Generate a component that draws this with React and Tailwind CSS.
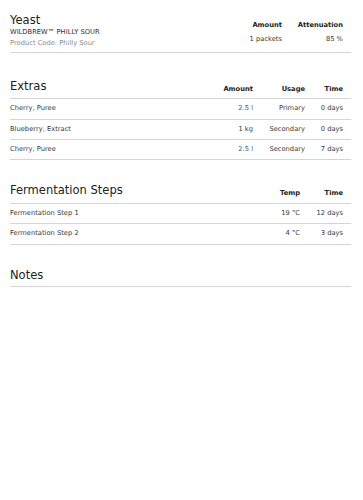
import React from "react";

const font = { fontFamily: '"DejaVu Sans", Verdana, sans-serif' };

function Heading({ children, className = "" }) {
  return (
    <div className={"text-[11.52px] leading-[14px] text-[#222] " + className}>{children}</div>
  );
}

function Label({ children }) {
  return <div className="text-right font-bold text-[6.72px] leading-[10px] text-[#222] pr-[8px]">{children}</div>;
}

function Cell({ children, right, className = "" }) {
  return (
    <div
      className={
        "text-[6.72px] leading-[9.3px] text-[#3a3a3a] py-[5px] whitespace-nowrap " +
        (right ? "text-right pr-[8px] " : "") +
        className
      }
    >
      {children}
    </div>
  );
}

export default function App() {
  const extras = [
    ["Cherry, Puree", "2.5 l", "Primary", "0 days", true],
    ["Blueberry, Extract", "1 kg", "Secondary", "0 days", false],
    ["Cherry, Puree", "2.5 l", "Secondary", "7 days", true],
  ];
  const steps = [
    ["Fermentation Step 1", "19 °C", "12 days"],
    ["Fermentation Step 2", "4 °C", "3 days"],
  ];
  return (
    <div className="bg-white w-[363px] min-h-[500px] pl-[10px] pr-[12px] pt-[13px]" style={font}>
      {/* Yeast */}
      <div className="grid grid-cols-[1fr_50px_61px] border-b border-[#d4d4d4] pb-[3.6px]">
        <div className="flex flex-col">
          <Heading>Yeast</Heading>
          <div className="mt-[0.4px] text-[6.72px] leading-[10.7px] text-[#333]">WILDBREW™ PHILLY SOUR</div>
          <div className="text-[6.72px] leading-[10.7px] text-[#8a8a8a]">Product Code: Philly Sour</div>
        </div>
        <div className="pt-[7px]">
          <Label>Amount</Label>
          <div className="mt-[4.4px] text-right text-[6.72px] leading-[10px] text-[#3a3a3a] pr-[8px] whitespace-nowrap">1 packets</div>
        </div>
        <div className="pt-[7px]">
          <Label>Attenuation</Label>
          <div className="mt-[4.4px] text-right text-[6.72px] leading-[10px] text-[#3a3a3a] pr-[8px] whitespace-nowrap">85 %</div>
        </div>
      </div>

      {/* Extras */}
      <div className="mt-[25.6px]">
        <div className="grid grid-cols-[1fr_46px_52px_38px] items-end border-b border-[#d4d4d4] pb-[4.5px]">
          <Heading className="mb-[1px]">Extras</Heading>
          <Label>Amount</Label>
          <Label>Usage</Label>
          <Label>Time</Label>
        </div>
        {extras.map((r, i) => (
          <div key={i} className="grid grid-cols-[1fr_46px_52px_38px] border-b border-[#d4d4d4]">
            <Cell>{r[0]}</Cell>
            <Cell right className={r[4] ? "text-[#4a5a72]" : ""}>{r[1]}</Cell>
            <Cell right>{r[2]}</Cell>
            <Cell right>{r[3]}</Cell>
          </div>
        ))}
      </div>

      {/* Fermentation Steps */}
      <div className="mt-[23.1px]">
        <div className="grid grid-cols-[1fr_50px_43px] items-end border-b border-[#d4d4d4] pb-[4.5px]">
          <Heading className="mb-[1px]">Fermentation Steps</Heading>
          <Label>Temp</Label>
          <Label>Time</Label>
        </div>
        {steps.map((r, i) => (
          <div key={i} className="grid grid-cols-[1fr_50px_43px] border-b border-[#d4d4d4]">
            <Cell>{r[0]}</Cell>
            <Cell right>{r[1]}</Cell>
            <Cell right>{r[2]}</Cell>
          </div>
        ))}
      </div>

      {/* Notes */}
      <div className="mt-[23.2px] border-b border-[#d4d4d4] pb-[4px]">
        <Heading>Notes</Heading>
      </div>
    </div>
  );
}
